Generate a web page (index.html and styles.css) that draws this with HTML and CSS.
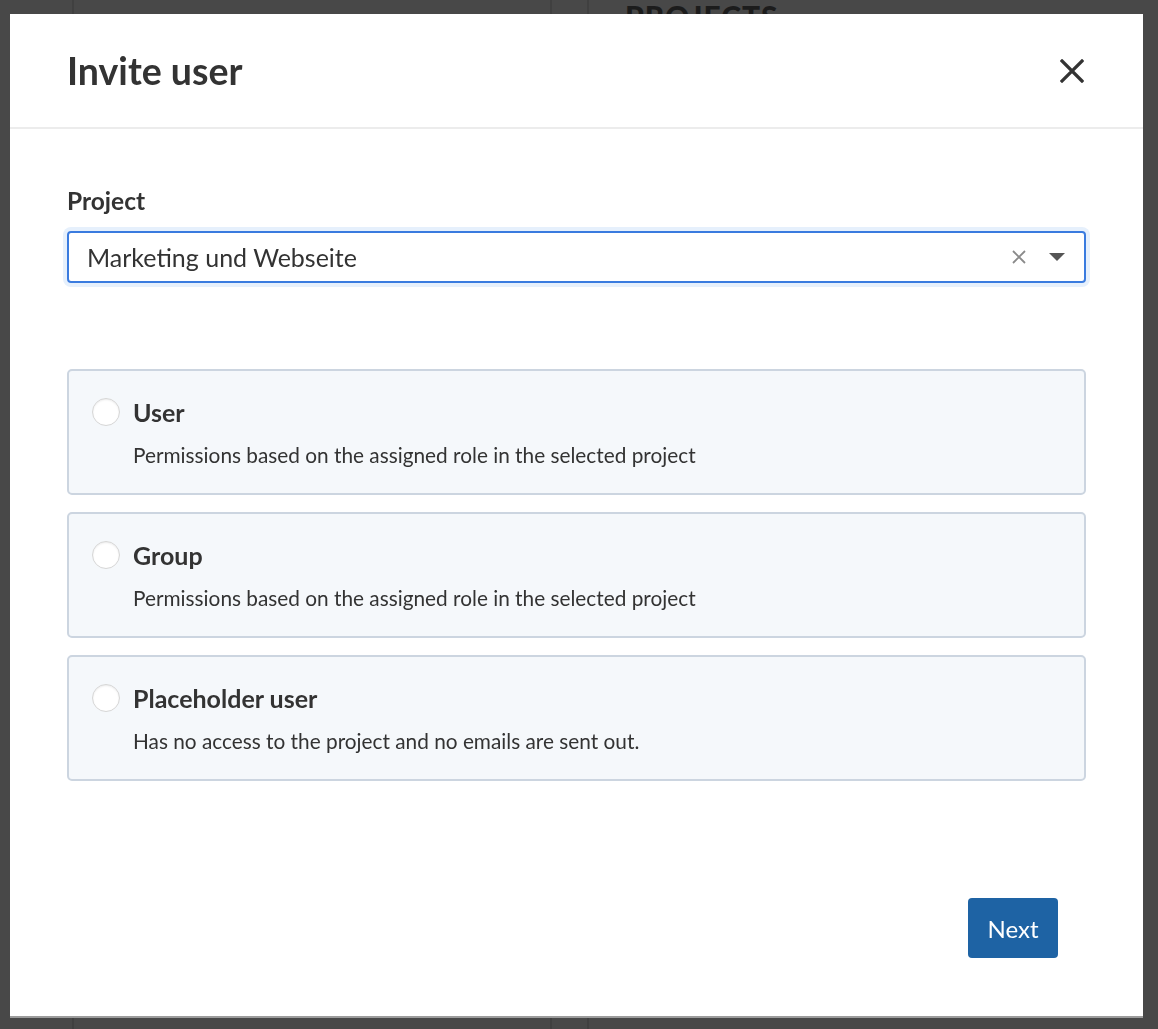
FILE: index.html
```html
<!DOCTYPE html>
<html lang="en">
<head>
<meta charset="utf-8">
<title>Invite user</title>
<link rel="stylesheet" href="styles.css">
</head>
<body>
<div class="page">
  <aside class="col col-a"></aside>
  <div class="col col-b"></div>
  <div class="col col-c"></div>
  <main class="main"><h2 class="page-title">PROJECTS</h2></main>
</div>

<div class="overlay">
  <div class="modal">
    <header class="modal-header">
      <h1 class="modal-title">Invite user</h1>
      <button class="close" aria-label="Close">
        <svg width="24" height="24" viewBox="0 0 24 24"><path d="M2 2 L22 22 M22 2 L2 22" stroke="#333" stroke-width="3.2" stroke-linecap="square" fill="none"/></svg>
      </button>
    </header>
    <section class="modal-body">
      <label class="field-label">Project</label>
      <div class="select">
        <span class="select-value">Marketing und Webseite</span>
        <span class="select-clear">
          <svg width="16" height="16" viewBox="0 0 16 16"><path d="M2 2 L14 14 M14 2 L2 14" stroke="#8a8a8a" stroke-width="1.8" fill="none"/></svg>
        </span>
        <span class="select-arrow">
          <svg width="16" height="8" viewBox="0 0 16 8"><path d="M0 0 H16 L8 8 Z" fill="#555"/></svg>
        </span>
      </div>

      <div class="options">
        <div class="option">
          <span class="radio"></span>
          <div class="option-text">
            <div class="option-title">User</div>
            <div class="option-desc">Permissions based on the assigned role in the selected project</div>
          </div>
        </div>
        <div class="option">
          <span class="radio"></span>
          <div class="option-text">
            <div class="option-title">Group</div>
            <div class="option-desc">Permissions based on the assigned role in the selected project</div>
          </div>
        </div>
        <div class="option">
          <span class="radio"></span>
          <div class="option-text">
            <div class="option-title">Placeholder user</div>
            <div class="option-desc">Has no access to the project and no emails are sent out.</div>
          </div>
        </div>
      </div>
    </section>
    <footer class="modal-footer">
      <button class="btn-next">Next</button>
    </footer>
  </div>
</div>
</body>
</html>
```

FILE: styles.css
```css
* { box-sizing: border-box; }
html, body { margin: 0; padding: 0; }
body {
  width: 1158px;
  height: 1029px;
  overflow: hidden;
  background: #484848;
  font-family: Lato, "Noto Sans", "Liberation Sans", sans-serif;
  color: #333;
}

.page {
  display: flex;
  height: 1029px;
}
.col { height: 100%; }
.col-a { width: 74px; border-right: 2px solid #404040; }
.col-b { width: 478px; border-right: 2px solid #404040; }
.col-c { width: 37px; border-right: 2px solid #404040; }
.main { flex: 1; padding-left: 36px; }
.page-title {
  margin: 0;
  margin-top: 1px;
  font-size: 30px;
  font-weight: 900;
  letter-spacing: 1px;
  color: #1c1c1c;
  line-height: 30px;
}

.overlay {
  position: fixed;
  inset: 0;
  padding: 14px 15px 13px 10px;
  display: flex;
}
.modal {
  width: 1133px;
  height: 1002px;
  background: #fff;
  display: flex;
  flex-direction: column;
  box-shadow: 0 2px 0 #9c9c9c;
}

.modal-header {
  height: 115px;
  border-bottom: 2px solid #ececec;
  display: flex;
  align-items: center;
  justify-content: space-between;
  padding: 0 59px 0 57px;
}
.modal-title {
  margin: 0;
  font-size: 37.5px;
  font-weight: 700;
  color: #333;
  line-height: 1;
}
.close {
  border: 0;
  background: none;
  padding: 0;
  width: 24px;
  height: 24px;
  display: flex;
}

.modal-body {
  padding: 55px 57px 0 57px;
  flex: 1;
}
.field-label {
  display: block;
  font-size: 24.5px;
  font-weight: 700;
  line-height: 34px;
  margin-bottom: 13px;
}
.select {
  height: 52px;
  border: 2px solid #3a7bdf;
  border-radius: 4px;
  box-shadow: 0 0 0 4px #e6f0fc;
  display: flex;
  align-items: center;
  padding: 0 19px 0 18px;
}
.select-value {
  flex: 1;
  font-size: 25px;
  color: #333;
  margin-top: -1px;
}
.select-clear { display: flex; margin-right: 22px; }
.select-arrow { display: flex; }

.options {
  margin-top: 86px;
  display: flex;
  flex-direction: column;
  gap: 17px;
}
.option {
  height: 126px;
  background: #f5f8fb;
  border: 2px solid #ccd5e0;
  border-radius: 5px;
  display: flex;
  align-items: flex-start;
  padding: 26px 24px 0 23px;
}
.radio {
  width: 28px;
  height: 28px;
  margin-top: 1px;
  border-radius: 50%;
  background: #fff;
  border: 1px solid #d6d6d6;
  box-shadow: inset 0 1px 2px rgba(0,0,0,0.08);
  margin-right: 13px;
  flex-shrink: 0;
}
.option-text { display: flex; flex-direction: column; }
.option-title {
  font-size: 25px;
  font-weight: 700;
  line-height: 30px;
}
.option-desc {
  margin-top: 15px;
  font-size: 20.8px;
  line-height: 26px;
}

.modal-footer {
  display: flex;
  justify-content: flex-end;
  padding: 0 85px 58px 0;
}
.btn-next {
  width: 90px;
  height: 60px;
  border: 0;
  border-radius: 4px;
  background: #1e63a4;
  color: #fff;
  font-family: Lato, "Noto Sans", sans-serif;
  font-size: 24px;
}
```
